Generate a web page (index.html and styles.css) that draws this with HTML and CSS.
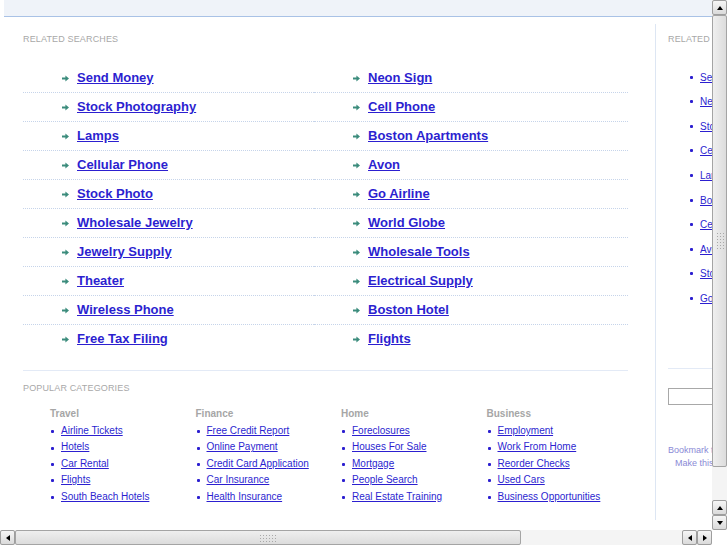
FILE: index.html
```html
<!DOCTYPE html>
<html lang="en">
<head>
    <meta charset="UTF-8">
    <meta name="viewport" content="width=device-width, initial-scale=1.0">
    <title>Related Searches</title>
    <link rel="stylesheet" href="styles.css">
</head>
<body>

    <div class="topbar"></div>

    <div class="page">
        <div class="main">
            <h3 class="label">Related Searches</h3>
            <ul class="related">
                <li><svg class="arrow" viewBox="0 0 7 7"><path d="M0 2.6h3.4V0.6L7 3.5 3.4 6.4V4.4H0z"/></svg><a href="#">Send Money</a></li>
                <li><svg class="arrow" viewBox="0 0 7 7"><path d="M0 2.6h3.4V0.6L7 3.5 3.4 6.4V4.4H0z"/></svg><a href="#">Neon Sign</a></li>
                <li><svg class="arrow" viewBox="0 0 7 7"><path d="M0 2.6h3.4V0.6L7 3.5 3.4 6.4V4.4H0z"/></svg><a href="#">Stock Photography</a></li>
                <li><svg class="arrow" viewBox="0 0 7 7"><path d="M0 2.6h3.4V0.6L7 3.5 3.4 6.4V4.4H0z"/></svg><a href="#">Cell Phone</a></li>
                <li><svg class="arrow" viewBox="0 0 7 7"><path d="M0 2.6h3.4V0.6L7 3.5 3.4 6.4V4.4H0z"/></svg><a href="#">Lamps</a></li>
                <li><svg class="arrow" viewBox="0 0 7 7"><path d="M0 2.6h3.4V0.6L7 3.5 3.4 6.4V4.4H0z"/></svg><a href="#">Boston Apartments</a></li>
                <li><svg class="arrow" viewBox="0 0 7 7"><path d="M0 2.6h3.4V0.6L7 3.5 3.4 6.4V4.4H0z"/></svg><a href="#">Cellular Phone</a></li>
                <li><svg class="arrow" viewBox="0 0 7 7"><path d="M0 2.6h3.4V0.6L7 3.5 3.4 6.4V4.4H0z"/></svg><a href="#">Avon</a></li>
                <li><svg class="arrow" viewBox="0 0 7 7"><path d="M0 2.6h3.4V0.6L7 3.5 3.4 6.4V4.4H0z"/></svg><a href="#">Stock Photo</a></li>
                <li><svg class="arrow" viewBox="0 0 7 7"><path d="M0 2.6h3.4V0.6L7 3.5 3.4 6.4V4.4H0z"/></svg><a href="#">Go Airline</a></li>
                <li><svg class="arrow" viewBox="0 0 7 7"><path d="M0 2.6h3.4V0.6L7 3.5 3.4 6.4V4.4H0z"/></svg><a href="#">Wholesale Jewelry</a></li>
                <li><svg class="arrow" viewBox="0 0 7 7"><path d="M0 2.6h3.4V0.6L7 3.5 3.4 6.4V4.4H0z"/></svg><a href="#">World Globe</a></li>
                <li><svg class="arrow" viewBox="0 0 7 7"><path d="M0 2.6h3.4V0.6L7 3.5 3.4 6.4V4.4H0z"/></svg><a href="#">Jewelry Supply</a></li>
                <li><svg class="arrow" viewBox="0 0 7 7"><path d="M0 2.6h3.4V0.6L7 3.5 3.4 6.4V4.4H0z"/></svg><a href="#">Wholesale Tools</a></li>
                <li><svg class="arrow" viewBox="0 0 7 7"><path d="M0 2.6h3.4V0.6L7 3.5 3.4 6.4V4.4H0z"/></svg><a href="#">Theater</a></li>
                <li><svg class="arrow" viewBox="0 0 7 7"><path d="M0 2.6h3.4V0.6L7 3.5 3.4 6.4V4.4H0z"/></svg><a href="#">Electrical Supply</a></li>
                <li><svg class="arrow" viewBox="0 0 7 7"><path d="M0 2.6h3.4V0.6L7 3.5 3.4 6.4V4.4H0z"/></svg><a href="#">Wireless Phone</a></li>
                <li><svg class="arrow" viewBox="0 0 7 7"><path d="M0 2.6h3.4V0.6L7 3.5 3.4 6.4V4.4H0z"/></svg><a href="#">Boston Hotel</a></li>
                <li><svg class="arrow" viewBox="0 0 7 7"><path d="M0 2.6h3.4V0.6L7 3.5 3.4 6.4V4.4H0z"/></svg><a href="#">Free Tax Filing</a></li>
                <li><svg class="arrow" viewBox="0 0 7 7"><path d="M0 2.6h3.4V0.6L7 3.5 3.4 6.4V4.4H0z"/></svg><a href="#">Flights</a></li>
            </ul>

            <div class="popular">
                <h3 class="label">Popular Categories</h3>
                <div class="cats">
                    <div class="cat">
                        <h4>Travel</h4>
                        <ul>
                            <li><a href="#">Airline Tickets </a></li>
                            <li><a href="#">Hotels </a></li>
                            <li><a href="#">Car Rental</a></li>
                            <li><a href="#">Flights </a></li>
                            <li><a href="#">South Beach Hotels</a></li>
                        </ul>
                    </div>
                    <div class="cat">
                        <h4>Finance</h4>
                        <ul>
                            <li><a href="#">Free Credit Report</a></li>
                            <li><a href="#">Online Payment</a></li>
                            <li><a href="#">Credit Card Application</a></li>
                            <li><a href="#">Car Insurance</a></li>
                            <li><a href="#">Health Insurance</a></li>
                        </ul>
                    </div>
                    <div class="cat">
                        <h4>Home</h4>
                        <ul>
                            <li><a href="#">Foreclosures </a></li>
                            <li><a href="#">Houses For Sale </a></li>
                            <li><a href="#">Mortgage </a></li>
                            <li><a href="#">People Search</a></li>
                            <li><a href="#">Real Estate Training</a></li>
                        </ul>
                    </div>
                    <div class="cat">
                        <h4>Business</h4>
                        <ul>
                            <li><a href="#">Employment</a></li>
                            <li><a href="#">Work From Home</a></li>
                            <li><a href="#">Reorder Checks </a></li>
                            <li><a href="#">Used Cars</a></li>
                            <li><a href="#">Business Opportunities</a></li>
                        </ul>
                    </div>
                </div>
            </div>
        </div>

        <div class="side">
            <h3 class="label">Related Searches</h3>
            <ul class="side-links">
                <li><a href="#">Send Money</a></li>
                <li><a href="#">Neon Sign</a></li>
                <li><a href="#">Stock Photography</a></li>
                <li><a href="#">Cellular Phone</a></li>
                <li><a href="#">Lamps</a></li>
                <li><a href="#">Boston Apartments</a></li>
                <li><a href="#">Cell Phone</a></li>
                <li><a href="#">Avon</a></li>
                <li><a href="#">Stock Photo</a></li>
                <li><a href="#">Go Airline</a></li>
            </ul>
            <div class="search">
                <input type="text">
            </div>
            <p class="bookmark">Bookmark this page</p>
            <p class="homepage">Make this your homepage</p>
        </div>
    </div>

    <!-- fake window scrollbars -->
    <div class="vscroll">
        <div class="btn"><span class="tri up"></span></div>
        <div class="thumb"><span class="grip"></span></div>
        <div class="track"></div>
        <div class="btn"><span class="tri up"></span></div>
        <div class="btn"><span class="tri down"></span></div>
    </div>
    <div class="hscroll">
        <div class="btn"><span class="tri left"></span></div>
        <div class="thumb"><span class="grip"></span></div>
        <div class="track"></div>
        <div class="btn"><span class="tri left"></span></div>
        <div class="btn"><span class="tri right"></span></div>
    </div>
    <div class="corner"></div>

</body>
</html>
```

FILE: styles.css
```css
* { margin: 0; padding: 0; box-sizing: border-box; }
body { font-family: "Liberation Sans", Arial, sans-serif; background: #fff; overflow: hidden; width: 727px; height: 545px; }
ul { list-style: none; }
a { color: #2c1fd0; }

.topbar { margin-left: 4px; height: 17px; background: #eff3f9; border-bottom: 1px solid #a9c2e6; }

.page { display: flex; width: 900px; }
.main { width: 655px; flex: none; padding: 0 27px 0 23px; }

.label { font-size: 9px; line-height: 11px; font-weight: normal; color: #a8a8a8; text-transform: uppercase; letter-spacing: 0.15px; }
.main > .label { margin-top: 17px; }

/* Related searches grid */
.related { display: grid; grid-template-columns: 291px 1fr; margin-top: 19px; }
.related li { display: flex; align-items: center; height: 29px; padding-left: 39px; border-bottom: 1px dotted #c6d4ea; }
.related li:nth-last-child(-n+2) { border-bottom: none; height: 28px; }
.related .arrow { width: 7px; height: 7px; fill: #3b8c7c; margin-right: 8px; flex: none; }
.related a { font-size: 13px; font-weight: bold; line-height: 16px; }

/* Popular categories */
.popular { margin-top: 17px; border-top: 1px solid #e3eaf6; padding-top: 12px; }
.cats { display: flex; padding-left: 27px; margin-top: 14px; }
.cat { width: 145.5px; flex: none; }
.cat h4 { font-size: 10px; line-height: 12px; color: #a6a6a6; font-weight: bold; margin-bottom: 3px; }
.cat li { display: flex; align-items: center; font-size: 10px; line-height: 16.4px; }
.cat li::before { content: ""; width: 3px; height: 3px; border-radius: 1px; background: #2c1fd0; margin: 1px 7px 0 1px; flex: none; }

/* Side column */
.side { width: 180px; flex: none; margin-top: 7px; height: 496px; border-left: 1px solid #dde6f3; padding-left: 12px; }
.side > .label { margin-top: 10px; white-space: nowrap; }
.side-links { margin-top: 20px; padding-left: 22px; }
.side-links li { display: flex; align-items: center; height: 24.55px; font-size: 10px; white-space: nowrap; }
.side-links li::before { content: ""; width: 3px; height: 3px; border-radius: 1px; background: #2c1fd0; margin-right: 7px; flex: none; }
.search { margin-top: 58px; border-top: 1px solid #e3eaf6; padding-top: 18px; }
.search input { width: 150px; height: 17px; border: 1px solid #a8a8a8; }
.bookmark, .homepage { font-size: 9px; line-height: 13px; color: #8a8ad6; white-space: nowrap; }
.bookmark { margin-top: 39px; }
.homepage { padding-left: 7px; }

/* Scrollbars */
.vscroll { position: fixed; top: 0; right: 0; width: 15px; height: 530px; display: flex; flex-direction: column; background: #ececec; }
.hscroll { position: fixed; left: 0; bottom: 0; width: 712px; height: 15px; display: flex; background: #ececec; }
.corner { position: fixed; right: 0; bottom: 0; width: 15px; height: 15px; background: #fff; }
.btn { width: 15px; height: 15px; flex: none; display: flex; align-items: center; justify-content: center; background: linear-gradient(#f6f6f6, #dadada); border: 1px solid #9e9e9e; border-radius: 2px; }
.thumb { flex: none; display: flex; align-items: center; justify-content: center; background: linear-gradient(90deg, #efefef, #dcdcdc); border: 1px solid #a4a4a4; border-radius: 2px; }
.vscroll .thumb { height: 452px; }
.hscroll .thumb { width: 506px; background: linear-gradient(#efefef, #dcdcdc); }
.track { flex: 1; background-color: #f4f4f4; background-image: radial-gradient(#d8d8d8 0.6px, transparent 0.7px); background-size: 2px 2px; }
.grip { width: 9px; height: 9px; background-image: radial-gradient(#a8a8a8 0.7px, transparent 0.9px); background-size: 3px 3px; }
.hscroll .grip { width: 18px; height: 8px; }
.vscroll .grip { width: 8px; height: 18px; }
.tri { width: 0; height: 0; border: 3px solid transparent; }
.tri.up { border-bottom: 4px solid #000; border-top: none; }
.tri.down { border-top: 4px solid #000; border-bottom: none; }
.tri.left { border-right: 4px solid #000; border-left: none; }
.tri.right { border-left: 4px solid #000; border-right: none; }
```
